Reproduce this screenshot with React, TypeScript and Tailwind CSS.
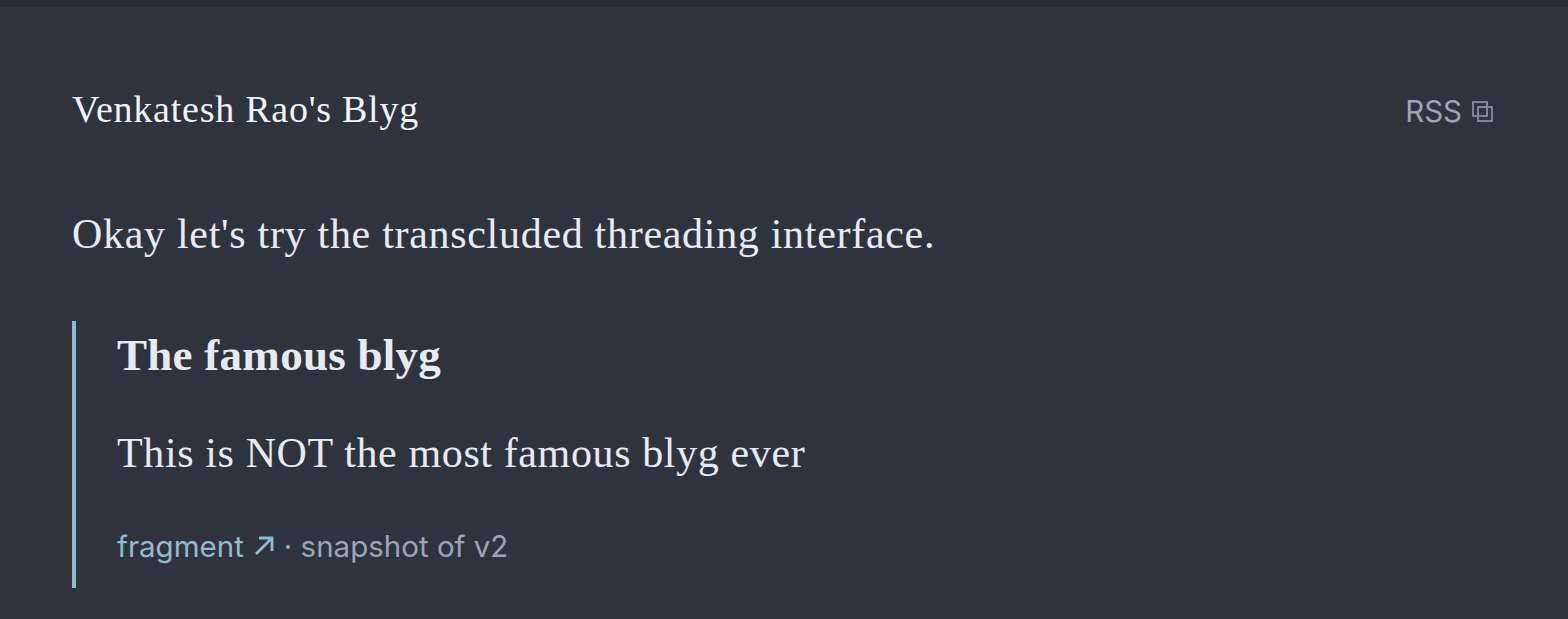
import React from 'react';

function CopyIcon() {
    return (
        <svg width="21" height="21" viewBox="0 0 21 21" fill="none" stroke="currentColor" strokeWidth="1.8" className="opacity-80">
            <rect x="1" y="1" width="14" height="14" />
            <rect x="6" y="6" width="14" height="14" />
        </svg>
    );
}

function ArrowIcon() {
    return (
        <svg width="20" height="20" viewBox="0 0 20 20" fill="none" stroke="currentColor" strokeWidth="2.8">
            <path d="M2 18 L18 2 M5 2 H18 V15" />
        </svg>
    );
}

export default function App() {
    return (
        <div className="h-[619px] w-[1568px] overflow-hidden bg-[#2f333e] font-['Inter',sans-serif] font-[420]">
            <div className="h-[7px] bg-[#282b35]" />

            <div className="pl-[72px] pr-[75px] pt-[82px]">
                {/* Header */}
                <div className="flex items-start justify-between">
                    <h1 className="font-['Liberation_Serif',serif] text-[38px] font-normal leading-[40px] tracking-[0.75px] text-[#f1f3f8]">
                        Venkatesh Rao's Blyg
                    </h1>
                    <a className="mt-[2px] flex items-center gap-[10px] text-[29.5px] leading-[40px] text-[#9ea4b5]">
                        RSS <CopyIcon />
                    </a>
                </div>

                {/* Post */}
                <p className="mt-[79px] font-['Liberation_Serif',serif] text-[42px] font-normal leading-[48px] tracking-[0.7px] text-[#e8eaf2]">
                    Okay let's try the transcluded threading interface.
                </p>

                <blockquote className="mt-[63px] h-[267px] border-l-[4px] border-[#8fbccb] pl-[41px] pt-[8px]">
                    <h2 className="font-['Liberation_Serif',serif] text-[45px] font-bold leading-[52px] tracking-[0.27px] text-[#e8eaf2]">
                        The famous blyg
                    </h2>
                    <p className="mt-[48px] font-['Liberation_Serif',serif] text-[42px] font-normal leading-[48px] tracking-[0.62px] text-[#e8eaf2]">
                        This is NOT the most famous blyg ever
                    </p>
                    <div className="mt-[47px] flex items-center text-[29.5px] text-[#9ea4b5]">
                        <span className="flex items-center gap-[10px] text-[#8fbccb]">
                            fragment <ArrowIcon />
                        </span>
                        <span className="ml-[10px]">· snapshot of v2</span>
                    </div>
                </blockquote>
            </div>
        </div>
    );
}
